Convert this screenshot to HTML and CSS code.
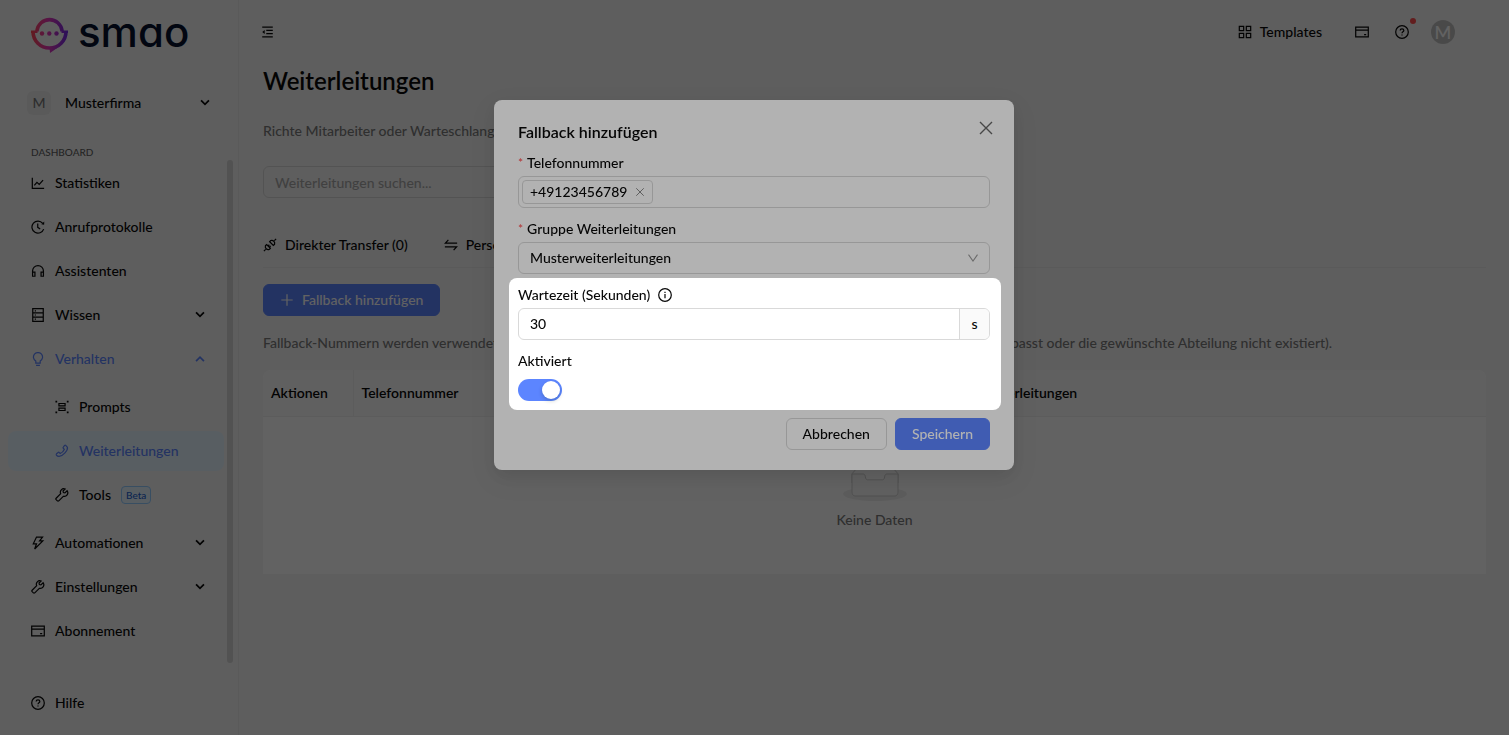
FILE: index.html
```html
<!DOCTYPE html>
<html lang="de">
<head>
    <meta charset="UTF-8">
    <meta name="viewport" content="width=device-width, initial-scale=1.0">
    <title>smao - Weiterleitungen</title>
    <link rel="stylesheet" href="styles.css">
</head>
<body>
<!-- Icon sprite -->
<svg class="sprite" aria-hidden="true">
    <symbol id="i-chart" viewBox="0 0 16 16"><path d="M1.5 2v12.2H15M3.8 10.8l3-3.6 2.6 2.4L13.8 4.8"/></symbol>
    <symbol id="i-history" viewBox="0 0 16 16"><path d="M13.4 3.8A6.9 6.9 0 1 0 14.5 10.4M7.7 4v4.4l2.8 2"/><path class="fill" d="M11.8 4.9l3.2.5.2-3.6z"/></symbol>
    <symbol id="i-headset" viewBox="0 0 16 16"><path d="M1.8 14V8a6.2 6.2 0 0 1 12.4 0v6M1.8 9.2h2.7V14H1.8zM11.5 9.2h2.7V14h-2.7z"/></symbol>
    <symbol id="i-database" viewBox="0 0 16 16"><path d="M2 .8h12v14.4H2zM2 5.6h12M2 10.4h12M4.3 3.2h1.4M4.3 8h1.4M4.3 12.8h1.4"/></symbol>
    <symbol id="i-bulb" viewBox="0 0 16 16"><path d="M5.5 12.6v-2.2a5.2 5.2 0 1 1 5 0v2.2zM5.8 15.2h4.4"/></symbol>
    <symbol id="i-prompt" viewBox="0 0 16 16"><path d="M4.5 4h7v2.8h-7zM4.5 9.2h7V12h-7z"/><path class="fill" d="M.5.8h2v2h-2zM13.5.8h2v2h-2zM.5 13.2h2v2h-2zM13.5 13.2h2v2h-2z"/></symbol>
    <symbol id="i-phone" viewBox="0 0 16 16"><path d="M12.2 1.6l2 2.1c.8 3.6-5 10.2-9.6 10.5-1.3 0-2.3-.6-3-1.6-.3-.6-.2-1 .2-1.4l1.7-1.5c.4-.4.9-.4 1.3 0l1.2 1.1c1.9-.8 3.7-2.6 4.6-4.6L9.5 4.9c-.4-.4-.4-.9 0-1.3l1.5-1.9c.4-.4.9-.4 1.2-.1z"/></symbol>
    <symbol id="i-tool" viewBox="0 0 16 16"><path d="M13.9 3.2l-2.6 2.4-1.7-.4-.4-1.7 2.4-2.4a4 4 0 0 0-5.1 5.400L1.300 11.700a1.200 1.200 0 0 0 0 1.600l1.400 1.400a1.200 1.200 0 0 0 1.600 0l5.200-5.200a4.100 4.100 0 0 0 4.400-6.300z"/></symbol>
    <symbol id="i-bolt" viewBox="0 0 16 16"><path d="M6.300 1.200h6.900L9.800 5.600h3.700L4.200 14.900l2.100-6H2.600z"/></symbol>
    <symbol id="i-card" viewBox="0 0 16 16"><path d="M.8 2.400h14.400v11.200H.8zM.8 5.800h14.400M10.400 10.900h2.400"/></symbol>
    <symbol id="i-help" viewBox="0 0 16 16"><circle cx="8" cy="8" r="7.200"/><path d="M5.900 6.400c0-1.300 1-2 2.100-2s2.100.8 2.100 1.900c0 1.500-2.100 1.500-2.100 3.100M8 10.800v1.300"/></symbol>
    <symbol id="i-grid" viewBox="0 0 16 16"><path d="M1.500 1.500h5v5h-5zM9.500 1.500h5v5h-5zM1.500 9.500h5v5h-5zM9.500 9.500h5v5h-5z"/></symbol>
    <symbol id="i-fold" viewBox="0 0 16 16"><path d="M1.500 2h13M6.500 6h8M6.500 10h8M1.500 14h13"/><path class="fill" d="M1.500 8l3-2.500v5z"/></symbol>
    <symbol id="i-api" viewBox="0 0 16 16"><path d="M7.600 4.200l1.300-1.300a3.400 3.400 0 0 1 4.300 4.300l-1.400 1.300zM13 3l2-2M8.400 11.800l-1.300 1.300a3.400 3.400 0 0 1-4.300-4.300l1.400-1.300zM3 13l-2 2M5.800 9.200l1.500-1.500M7.300 10.500l1.500-1.500"/></symbol>
    <symbol id="i-swap" viewBox="0 0 16 16"><path d="M15 5.800H1.600L5 2.200M1 10.200h13.400L11 13.800"/></symbol>
    <symbol id="i-plus" viewBox="0 0 16 16"><path d="M8 1.500v13M1.500 8h13"/></symbol>
    <symbol id="i-close" viewBox="0 0 16 16"><path d="M2 2l12 12M14 2L2 14"/></symbol>
    <symbol id="i-info" viewBox="0 0 16 16"><circle cx="8" cy="8" r="7.200"/><path d="M8 6.900v4.900M8 4.200v1.400"/></symbol>
    <symbol id="i-down" viewBox="0 0 16 16"><path d="M3.500 5l4.500 4.500L12.500 5"/></symbol>
    <symbol id="i-up" viewBox="0 0 16 16"><path d="M3.500 10.500L8 6l4.500 4.500"/></symbol>
    <symbol id="i-select" viewBox="0 0 16 16"><path d="M2 3.500l6 8.500 6-8.500"/></symbol>
</svg>

<div class="layout">
    <aside class="sidebar">
        <a class="logo" href="#">
            <svg class="logo-mark" viewBox="0 0 37 37" aria-hidden="true">
                <defs>
                    <linearGradient id="logoGradient" x1="0" y1="0" x2="37" y2="0" gradientUnits="userSpaceOnUse">
                        <stop offset="0" stop-color="#ff4a50"/>
                        <stop offset=".45" stop-color="#e536b4"/>
                        <stop offset="1" stop-color="#6f2be8"/>
                    </linearGradient>
                </defs>
                <g fill="none" stroke="url(#logoGradient)" stroke-width="3.600">
                    <path d="M6 15.600V14.600a12.600 12.600 0 0 1 25 0v1"/>
                    <path d="M0 15.800h6.500M30.500 15.800H37" stroke-width="2.600"/>
                    <path d="M2 15.500a16.500 16.500 0 0 0 33 0"/>
                </g>
                <g fill="url(#logoGradient)">
                    <path d="M18.500 31l8 .8-7.500 5.200z"/>
                    <circle cx="11" cy="17.500" r="2.200"/>
                    <circle cx="18.300" cy="17.500" r="2.200"/>
                    <circle cx="25.500" cy="17.500" r="2.200"/>
                </g>
            </svg>
            <span class="logo-text">smao</span>
        </a>

        <button class="company" type="button">
            <span class="company-avatar">M</span>
            <span class="company-name">Musterfirma</span>
            <svg class="icon chevron"><use href="#i-down"/></svg>
        </button>

        <div class="menu-title">DASHBOARD</div>

        <div class="menu-scroll">
            <nav class="menu">
                <a class="menu-item" href="#"><svg class="icon"><use href="#i-chart"/></svg>Statistiken</a>
                <a class="menu-item" href="#"><svg class="icon"><use href="#i-history"/></svg>Anrufprotokolle</a>
                <a class="menu-item" href="#"><svg class="icon"><use href="#i-headset"/></svg>Assistenten</a>
                <button class="menu-item" type="button"><svg class="icon"><use href="#i-database"/></svg>Wissen<svg class="icon chevron"><use href="#i-down"/></svg></button>
                <button class="menu-item open" type="button"><svg class="icon"><use href="#i-bulb"/></svg>Verhalten<svg class="icon chevron"><use href="#i-up"/></svg></button>
                <div class="submenu">
                    <a class="menu-item" href="#"><svg class="icon"><use href="#i-prompt"/></svg>Prompts</a>
                    <a class="menu-item selected" href="#"><svg class="icon"><use href="#i-phone"/></svg>Weiterleitungen</a>
                    <a class="menu-item" href="#"><svg class="icon"><use href="#i-tool"/></svg>Tools<span class="tag-beta">Beta</span></a>
                </div>
                <button class="menu-item" type="button"><svg class="icon"><use href="#i-bolt"/></svg>Automationen<svg class="icon chevron"><use href="#i-down"/></svg></button>
                <button class="menu-item" type="button"><svg class="icon"><use href="#i-tool"/></svg>Einstellungen<svg class="icon chevron"><use href="#i-down"/></svg></button>
                <a class="menu-item" href="#"><svg class="icon"><use href="#i-card"/></svg>Abonnement</a>
            </nav>
            <div class="menu-thumb"></div>
        </div>

        <a class="menu-item help" href="#"><svg class="icon"><use href="#i-help"/></svg>Hilfe</a>
    </aside>

    <div class="page">
        <header class="topbar">
            <button class="icon-button fold" type="button" aria-label="Menü einklappen"><svg class="icon"><use href="#i-fold"/></svg></button>
            <div class="topbar-right">
                <a class="templates" href="#"><svg class="icon"><use href="#i-grid"/></svg>Templates</a>
                <button class="icon-button" type="button" aria-label="Abonnement"><svg class="icon"><use href="#i-card"/></svg></button>
                <button class="icon-button" type="button" aria-label="Hilfe"><svg class="icon"><use href="#i-help"/></svg><span class="dot"></span></button>
                <button class="avatar" type="button">M</button>
            </div>
        </header>

        <main class="content">
            <h1>Weiterleitungen</h1>
            <p class="muted">Richte Mitarbeiter oder Warteschlangen ein.</p>
            <input class="search" type="text" placeholder="Weiterleitungen suchen..." aria-label="Weiterleitungen suchen">

            <div class="tabs">
                <button class="tab" type="button"><svg class="icon"><use href="#i-api"/></svg>Direkter Transfer (0)</button>
                <button class="tab" type="button"><svg class="icon"><use href="#i-swap"/></svg>Personen Transfer (0)</button>
            </div>

            <button class="btn btn-primary btn-add" type="button"><svg class="icon"><use href="#i-plus"/></svg>Fallback hinzufügen</button>

            <p class="muted">Fallback-Nummern werden verwendet, wenn kein Ziel gefunden wird (z. B. wenn keine Weiterleitung zum Anliegen genau passt oder die gewünschte Abteilung nicht existiert).</p>

            <table class="table">
                <thead>
                    <tr>
                        <th class="col-actions">Aktionen</th>
                        <th>Telefonnummer</th>
                        <th>Gruppe Weiterleitungen</th>
                    </tr>
                </thead>
                <tbody>
                    <tr>
                        <td colspan="3">
                            <svg class="empty-image" viewBox="0 0 64 41" aria-hidden="true">
                                <g transform="translate(0 1)" fill="none">
                                    <ellipse fill="#f0f0f0" cx="32" cy="33" rx="32" ry="7"/>
                                    <g stroke="#d0d0d0">
                                        <path d="M55 12.760L44.854 1.258C44.367.474 43.656 0 42.907 0H21.093c-.749 0-1.460.474-1.947 1.257L9 12.761V22h46v-9.240z"/>
                                        <path fill="#fafafa" d="M41.613 15.931c0-1.605.994-2.930 2.227-2.931H55v18.137C55 33.260 53.680 35 52.050 35h-40.100C10.320 35 9 33.259 9 31.137V13h11.160c1.233 0 2.227 1.323 2.227 2.928v.022c0 1.605 1.005 2.901 2.237 2.901h14.752c1.232 0 2.237-1.308 2.237-2.913v-.007z"/>
                                    </g>
                                </g>
                            </svg>
                            <div class="empty-text">Keine Daten</div>
                        </td>
                    </tr>
                </tbody>
            </table>
        </main>
    </div>
</div>

<div class="mask">
    <form class="modal" role="dialog" aria-labelledby="modalTitle">
        <div class="modal-header">
            <h2 id="modalTitle">Fallback hinzufügen</h2>
            <button class="modal-close" type="button" aria-label="Schließen"><svg class="icon"><use href="#i-close"/></svg></button>
        </div>

        <div class="fields">
            <div class="field">
                <label class="required" for="phone">Telefonnummer</label>
                <div class="control tags">
                    <span class="tag">+49123456789<button type="button" aria-label="Entfernen"><svg class="icon"><use href="#i-close"/></svg></button></span>
                    <input id="phone" type="text">
                </div>
            </div>
            <div class="field">
                <label class="required" for="group">Gruppe Weiterleitungen</label>
                <div class="select">
                    <select class="control" id="group">
                        <option>Musterweiterleitungen</option>
                    </select>
                    <svg class="icon"><use href="#i-select"/></svg>
                </div>
            </div>
        </div>

        <!-- Tour spotlight: everything around this block is dimmed -->
        <div class="fields spotlight">
            <div class="field">
                <label for="wait">Wartezeit (Sekunden)<svg class="icon"><use href="#i-info"/></svg></label>
                <div class="control addon-group">
                    <input id="wait" type="text" inputmode="numeric" value="30">
                    <span class="addon">s</span>
                </div>
            </div>
            <div class="field">
                <label for="active">Aktiviert</label>
                <div class="switch-row">
                    <input class="switch" id="active" type="checkbox" role="switch" checked>
                </div>
            </div>
        </div>

        <div class="modal-footer">
            <button class="btn btn-default" type="button">Abbrechen</button>
            <button class="btn btn-primary" type="submit">Speichern</button>
        </div>
    </form>
</div>
</body>
</html>
```

FILE: styles.css
```css
:root {
    --primary: #5c85ff;
    --text: #080808;
    --muted: #7a7a7a;
    --border: #d9d9d9;
    --bg: #f5f5f5;
}

* {
    margin: 0;
    padding: 0;
    box-sizing: border-box;
}

body {
    font-family: Lato, "Noto Sans", sans-serif;
    font-size: 14px;
    line-height: 22px;
    font-weight: 500;
    background: var(--bg);
    color: var(--text);
    min-height: 100vh;
}

button,
input,
select {
    font: inherit;
    color: inherit;
}

button {
    background: none;
    border: none;
    cursor: pointer;
}

a {
    color: inherit;
    text-decoration: none;
}

.sprite {
    display: none;
}

.icon {
    width: 14px;
    height: 14px;
    flex: none;
    fill: none;
    stroke: currentColor;
    stroke-width: 1.4;
}

.icon .fill,
.fill {
    fill: currentColor;
    stroke: none;
}

.layout {
    display: flex;
    min-height: 100vh;
}

/* Sidebar */
.sidebar {
    width: 239px;
    flex: none;
    display: flex;
    flex-direction: column;
    border-right: 1px solid #ebebeb;
    padding-bottom: 12px;
}

.logo {
    display: flex;
    align-items: center;
    gap: 10px;
    height: 68px;
    padding-left: 31px;
}

.logo-mark {
    width: 37px;
    height: 37px;
}

.logo-text {
    font-family: Inter, sans-serif;
    font-size: 42px;
    line-height: 48px;
    font-weight: 500;
    font-feature-settings: "cv11";
    color: #06122e;
    padding-bottom: 4px;
}

.company {
    display: flex;
    align-items: center;
    height: 40px;
    margin-top: 15px;
    padding: 0 26px 0 27px;
}

.company-avatar {
    width: 24px;
    height: 24px;
    line-height: 24px;
    border-radius: 6px;
    background: #ebebeb;
    color: #777;
}

.company-name {
    margin-left: 14px;
}

.chevron {
    margin-left: auto;
    stroke-width: 2;
}

.menu-title {
    margin-top: 21px;
    padding-left: 31px;
    font-size: 10px;
    line-height: 16px;
    color: #5f5f5f;
}

.menu-scroll {
    display: flex;
    flex: 1;
    gap: 3px;
}

.menu {
    flex: 1;
    padding: 3px 0 0 8px;
}

.menu-item {
    display: flex;
    align-items: center;
    gap: 10px;
    width: 100%;
    height: 40px;
    margin-bottom: 4px;
    padding: 0 17px 0 23px;
    border-radius: 8px;
}

.menu-item.open {
    color: var(--primary);
}

.submenu {
    padding: 4px 0;
}

.submenu .menu-item {
    padding-left: 47px;
}

.menu-item.selected {
    background: #e6f4ff;
    color: var(--primary);
}

.tag-beta {
    font-size: 10px;
    line-height: 16px;
    padding: 0 4px;
    border: 1px solid #91caff;
    border-radius: 4px;
    background: #e6f4ff;
    color: #1c5fd0;
}

.menu-thumb {
    width: 6px;
    height: 503px;
    margin-right: 5px;
    border-radius: 3px;
    background: #d5d5d5;
}

.menu-item.help {
    margin: 0;
    padding-left: 31px;
}

/* Page */
.page {
    flex: 1;
    min-width: 0;
}

.topbar {
    display: flex;
    justify-content: space-between;
    align-items: center;
    height: 64px;
    padding: 0 54px 0 20px;
}

.topbar-right {
    display: flex;
    align-items: center;
    gap: 22px;
}

.templates {
    display: flex;
    align-items: center;
    gap: 8px;
    margin-right: 9px;
}

.icon-button {
    display: flex;
    position: relative;
    padding: 2px;
}

.fold .icon {
    width: 13px;
}

.dot {
    position: absolute;
    top: -5px;
    right: -5px;
    width: 6px;
    height: 6px;
    border-radius: 50%;
    background: #ff4d4f;
}

.avatar {
    width: 24px;
    height: 24px;
    margin-left: -2px;
    line-height: 24px;
    border-radius: 50%;
    background: #bfbfbf;
    color: #fff;
    font-size: 18px;
}

.content {
    padding: 1px 23px 24px 24px;
}

h1 {
    font-size: 24px;
    line-height: 32px;
    font-weight: 600;
    margin-bottom: 23px;
}

.muted {
    color: var(--muted);
    white-space: nowrap;
}

.search {
    display: block;
    width: 300px;
    height: 32px;
    margin-top: 24px;
    padding: 0 11px;
    border: 1px solid var(--border);
    border-radius: 6px;
    background: transparent;
}

.search::placeholder {
    color: #a8a8a8;
}

.tabs {
    display: flex;
    gap: 36px;
    margin: 24px 0 16px;
    border-bottom: 1px solid #ebebeb;
}

.tab {
    display: flex;
    align-items: center;
    gap: 8px;
    height: 45px;
}

.btn {
    height: 32px;
    padding: 0 16px;
    border: 1px solid var(--border);
    border-radius: 6px;
}

.btn-primary {
    background: var(--primary);
    border-color: var(--primary);
    color: #fff;
}

.btn-add {
    display: flex;
    align-items: center;
    gap: 8px;
    margin-bottom: 16px;
}

.table {
    width: 100%;
    margin-top: 16px;
    border-collapse: collapse;
    table-layout: fixed;
    background: #fff;
    border-radius: 8px 8px 0 0;
    overflow: hidden;
}

.table th {
    height: 46px;
    padding: 0 8px;
    text-align: left;
    font-weight: 600;
    background: #fafafa;
    border-bottom: 1px solid #f0f0f0;
}

.table .col-actions {
    width: 90px;
    border-right: 1px solid #f0f0f0;
}

.table td {
    height: 158px;
    text-align: center;
}

.empty-image {
    display: block;
    width: 64px;
    height: 41px;
    margin: 0 auto 8px;
}

.empty-text {
    color: var(--muted);
}

/* Modal */
.mask {
    position: fixed;
    inset: 0;
    padding-right: 1px;
    overflow: hidden;
    background: rgba(0, 0, 0, 0.45);
}

.modal {
    width: 520px;
    margin: 100px auto 0;
    padding: 20px 24px;
    background: #fff;
    border-radius: 8px;
    box-shadow: 0 6px 16px rgba(0, 0, 0, 0.08), 0 9px 28px 8px rgba(0, 0, 0, 0.05);
}

.modal-header {
    display: flex;
    justify-content: space-between;
    margin-bottom: 8px;
}

.modal-header h2 {
    font-size: 16px;
    line-height: 24px;
    font-weight: 600;
}

.modal-close {
    display: flex;
    height: 16px;
    margin-right: -4px;
    color: #666;
}

.modal-close .icon {
    width: 16px;
    height: 16px;
}

.fields {
    display: flex;
    flex-direction: column;
    gap: 10px;
}

.field label {
    display: flex;
    align-items: center;
    gap: 8px;
    margin-bottom: 2px;
}

.field label.required {
    gap: 4px;
}

.required::before {
    content: "*";
    color: #ff4d4f;
    font-size: 12px;
}

.control {
    width: 100%;
    height: 32px;
    border: 1px solid var(--border);
    border-radius: 6px;
    background: #fff;
}

.control input {
    flex: 1;
    min-width: 0;
    border: none;
    background: none;
    outline: none;
}

.tags {
    display: flex;
    align-items: center;
    padding: 3px;
}

.tag {
    display: flex;
    align-items: center;
    gap: 8px;
    height: 24px;
    padding: 0 7px;
    border: 1px solid var(--border);
    border-radius: 4px;
}

.tag button {
    display: flex;
    color: #777;
}

.tag .icon {
    width: 10px;
    height: 10px;
}

.select {
    display: grid;
    align-items: center;
}

.select > * {
    grid-area: 1 / 1;
}

.select select {
    appearance: none;
    padding: 0 11px;
}

.select .icon {
    width: 12px;
    height: 12px;
    margin-right: 11px;
    justify-self: end;
    color: #999;
    pointer-events: none;
}

.spotlight {
    position: relative;
    margin: 4px -11px 0 -9px;
    padding: 6px 11px 4px 9px;
    background: #fff;
    border-radius: 8px;
    box-shadow: 0 0 0 9999px rgba(0, 0, 0, 0.3);
}

.addon-group {
    display: flex;
    overflow: hidden;
}

.addon-group input {
    padding: 0 11px;
}

.addon {
    width: 30px;
    line-height: 30px;
    text-align: center;
    background: #fafafa;
    border-left: 1px solid var(--border);
}

.switch-row {
    display: flex;
    align-items: center;
    height: 32px;
}

.switch {
    appearance: none;
    width: 44px;
    height: 22px;
    padding: 2px;
    border-radius: 11px;
    background: #bfbfbf;
    cursor: pointer;
}

.switch::before {
    content: "";
    display: block;
    width: 18px;
    height: 18px;
    border-radius: 50%;
    background: #fff;
    box-shadow: 0 2px 4px rgba(0, 35, 11, 0.2);
}

.switch:checked {
    background: var(--primary);
}

.switch:checked::before {
    margin-left: auto;
}

.modal-footer {
    display: flex;
    justify-content: flex-end;
    gap: 8px;
    margin-top: 8px;
}
```
